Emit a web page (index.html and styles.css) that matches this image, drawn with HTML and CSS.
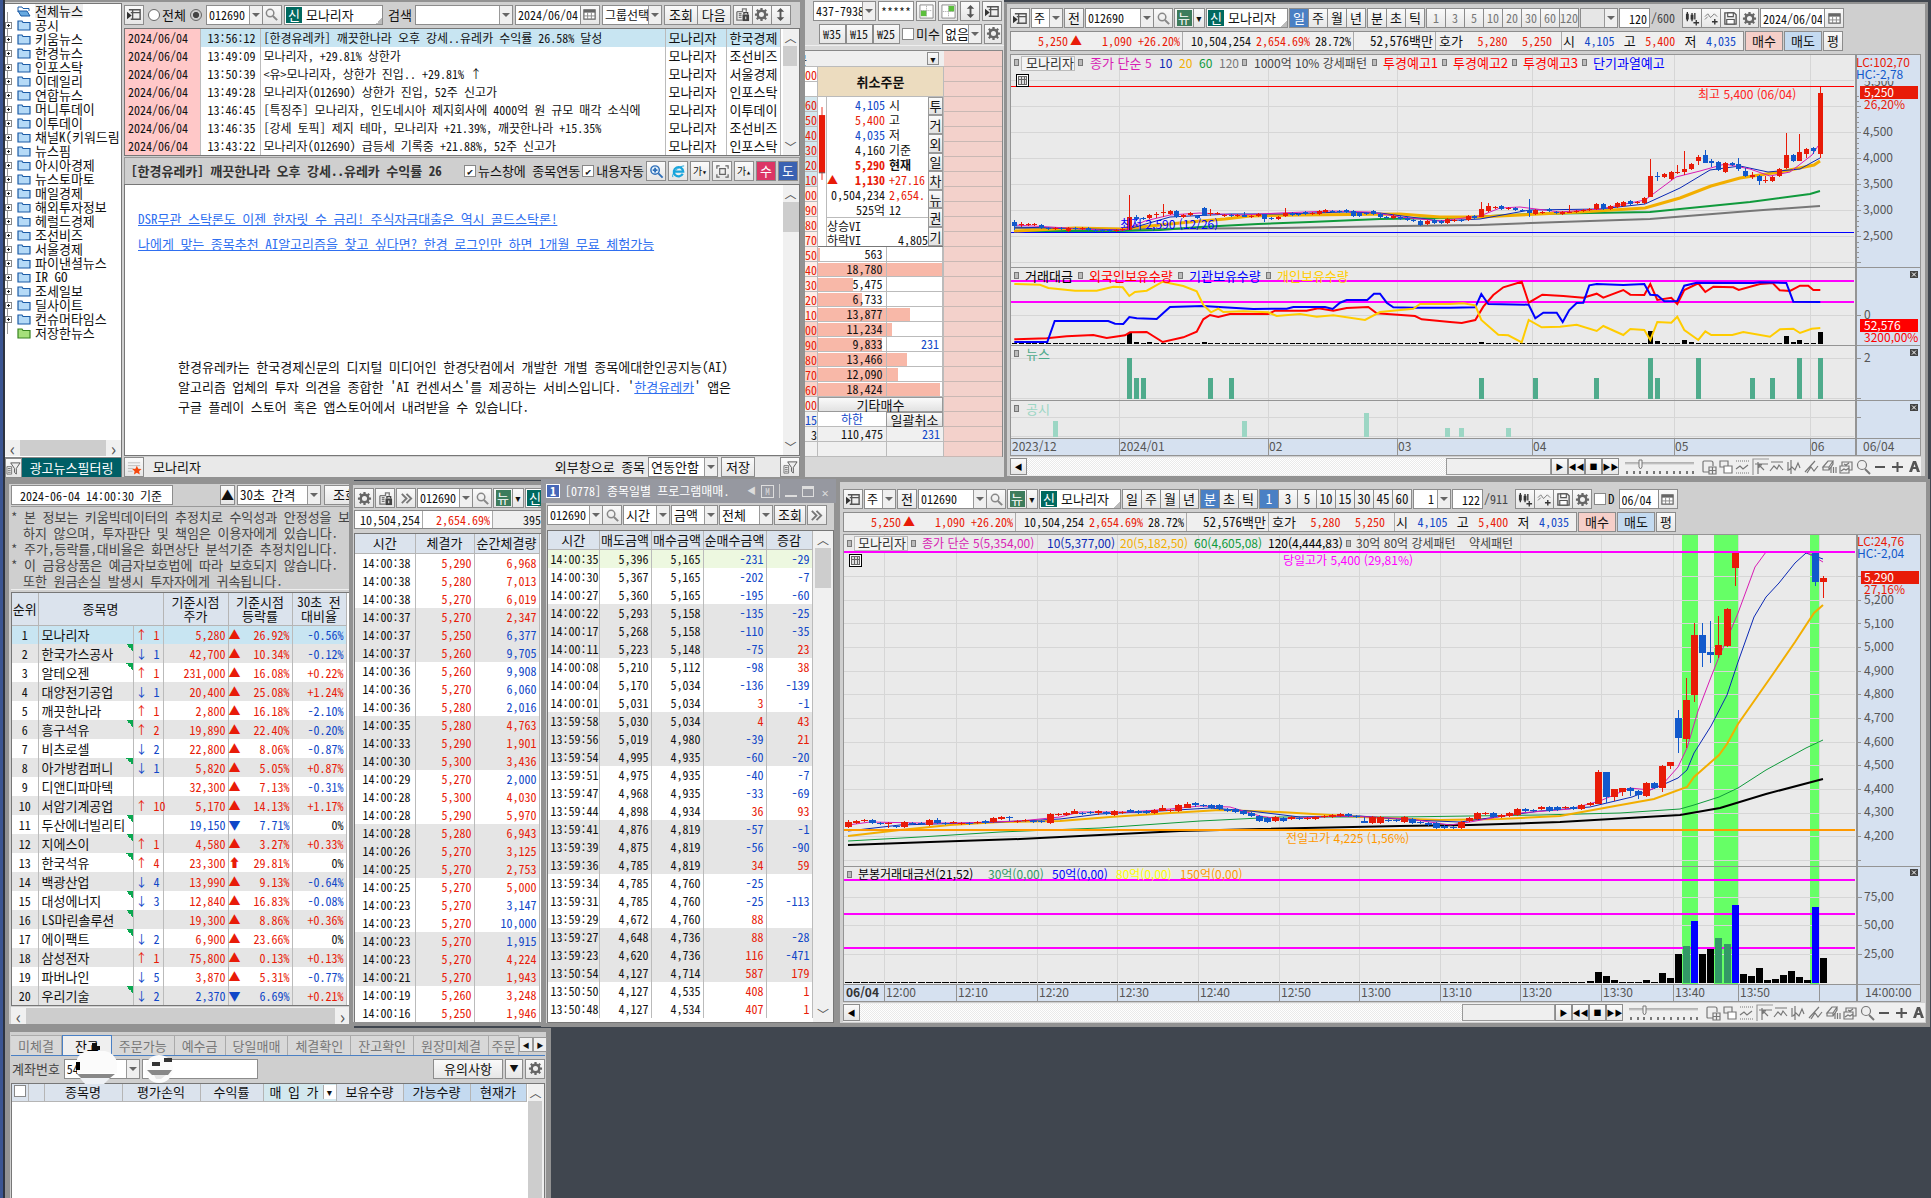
FILE: index.html
```html
<!DOCTYPE html>
<html lang="ko">
<head>
<meta charset="utf-8">
<title>트레이딩 데스크톱</title>
<link rel="stylesheet" href="styles.css">
</head>
<body>
<svg class="defs" aria-hidden="true">
<symbol id="panel" viewBox="0 0 16 16"><path d="M2 3h12v10H4M6 3v10M4 6h10" fill="none" stroke="#555" stroke-width="1.5"/><path d="M0 5l5 4-5 4z" fill="#333"/></symbol>
<symbol id="gear" viewBox="0 0 16 16"><circle cx="8" cy="8" r="4" fill="none" stroke="#666" stroke-width="2.6"/><path d="M8 1v3M8 12v3M1 8h3M12 8h3M3 3l2 2M11 11l2 2M13 3l-2 2M3 13l2-2" stroke="#666" stroke-width="2.4"/></symbol>
<symbol id="search" viewBox="0 0 16 16"><circle cx="6.5" cy="6.5" r="4" fill="none" stroke="#888" stroke-width="1.6"/><path d="M9.5 9.500l4.500 4.500" stroke="#888" stroke-width="2.200"/></symbol>
<symbol id="lock" viewBox="0 0 16 16"><path d="M2 5h6V2h4v3M2 5v9h6M4 7h3M4 9h3M4 11h3" fill="none" stroke="#777" stroke-width="1.4"/><path d="M8 8h7v7H8z" fill="#444"/><path d="M9.500 8V6h4v2" fill="none" stroke="#444" stroke-width="1.400"/><path d="M11 10h1v3h-1z" fill="#fff"/></symbol>
<symbol id="updown" viewBox="0 0 16 16"><path d="M8 1l4 4H9v6h3l-4 4-4-4h3V5H4z" fill="#555"/></symbol>
<symbol id="cal" viewBox="0 0 16 16"><path d="M2 3h12v10H2z" fill="#fff" stroke="#666" stroke-width="1.300"/><path d="M2 3h12v3H2z" fill="#666"/><path d="M6 6v7M10 6v7M2 9.500h12" stroke="#888"/></symbol>
<symbol id="cand" viewBox="0 0 16 16"><path d="M1 3h3v6H1zM6 4h3v5H6z" fill="#333"/><path d="M2.500 1v10M7.500 2v9M10.500 2v7M12 9.500v6M9 12.500h6" stroke="#333" stroke-width="1.400"/></symbol>
<symbol id="linep" viewBox="0 0 16 16"><path d="M1 6l3-3 3 4 4-4 3 3M1 9l3-3" fill="none" stroke="#777"/><path d="M11.500 8.500v6M8.500 11.500h6" stroke="#333" stroke-width="1.500"/></symbol>
<symbol id="save" viewBox="0 0 16 16"><path d="M2 2h10l2 2v10H2z" fill="#eee" stroke="#555" stroke-width="1.400"/><path d="M5 2h6v4H5zM4 9h8v5H4z" fill="#fff" stroke="#555" stroke-width="1.200"/></symbol>
<symbol id="more" viewBox="0 0 16 16"><path d="M3 3l5 5-5 5M8 3l5 5-5 5" fill="none" stroke="#777" stroke-width="2"/></symbol>
<symbol id="funnel" viewBox="0 0 16 16"><path d="M5 2h10l-4 6v6l-2-2V8z" fill="#eee" stroke="#555"/><path d="M1 6h5v8H1zM2 8h3M2 10h3M2 12h3" fill="none" stroke="#777"/></symbol>
<symbol id="star" viewBox="0 0 16 16"><path d="M1 3h13M1 6h13M1 9h6M1 12h5" stroke="#bbb"/><path d="M10.500 6l1.500 3.200 3.500.4-2.600 2.300.7 3.500-3.100-1.800-3.100 1.800.7-3.500L5.500 9.600l3.500-.4z" fill="#f5470d"/></symbol>
<symbol id="folder" viewBox="0 0 14 12"><path d="M1 2h4l1 1.500h7V11H1z" fill="#b5daf7" stroke="#1b5ba5" stroke-width="1.200"/></symbol>
<symbol id="folderg" viewBox="0 0 14 12"><path d="M1 2h4l1 1.500h7V11H1z" fill="#a5e07a" stroke="#388420" stroke-width="1.200"/></symbol>
<symbol id="foldero" viewBox="0 0 14 12"><path d="M1 7V2h4l1 1.500h6V6" fill="#fff" stroke="#1b5ba5"/><path d="M1 6h9l3 5H4z" fill="#67a9e0" stroke="#1b5ba5"/></symbol>
<symbol id="zoomin" viewBox="0 0 16 16"><circle cx="6.500" cy="6.500" r="4.500" fill="#e3f1fc" stroke="#2f6fb8" stroke-width="1.500"/><path d="M6.500 4v5M4 6.500h5M10 10l4.500 4.500" stroke="#2f6fb8" stroke-width="2"/></symbol>
<symbol id="ie" viewBox="0 0 16 16"><path d="M12.500 10.500A5 5 0 1 1 13 8H4" fill="none" stroke="#19a5dc" stroke-width="2.400"/><path d="M2 14C0 11 8 2 14 2" fill="none" stroke="#19a5dc"/></symbol>
<symbol id="fit" viewBox="0 0 16 16"><path d="M5 5h6v6H5zM2 5V2h3M11 2h3v3M14 11v3h-3M5 14H2v-3" fill="none" stroke="#666" stroke-width="1.300"/></symbol>
<symbol id="gridl" viewBox="0 0 16 16"><path d="M1 1h14v14H1z" fill="#fff" stroke="#888"/><path d="M2 7h6v6H2z" fill="#5bbf3c"/><path d="M8 2v12M2 7h12" stroke="#999" stroke-dasharray="1 1"/></symbol>
<symbol id="gridr" viewBox="0 0 16 16"><path d="M1 1h14v14H1z" fill="#fff" stroke="#888"/><path d="M8 2h6v6H8z" fill="#5bbf3c"/><path d="M8 2v12M2 8h12" stroke="#999" stroke-dasharray="1 1"/></symbol>
<symbol id="tools" viewBox="0 0 220 18"><g fill="none" stroke="#777" stroke-width="1.200"><path d="M8 14H3q-1 0-1-1V4q0-1 1-1h7q2 0 2 2v3"/><path d="M8 9h7v7H8zM11.500 9v7M8 12.500h7"/><path d="M19 3h8v6h-8z"/><path d="M23 8h8v7h-8z" fill="#fff"/><path d="M35 3h13M35 15h13" stroke-dasharray="1 1"/><path d="M35 11l4-3 3 3 5-4"/><path d="M52 17V1h16" stroke="#999"/><path d="M54 6h13M57 4v12M58 7l5 5M58 10V7h3"/><path d="M70 4h12M69 13l4-5 3 3 2-4 4 5"/><path d="M90 2v14M88 12l3-3 3 3 3-7 2 5M87 4v9"/><path d="M104 14l10-11M106 15l4-6 3 4 4-5"/><path d="M122 9l5-6h5l-4 6zM122 9v3h6V9M128 12l4-6V3" /><path d="M130 9v6M132.500 9v6M135 9v6"/><path d="M139 8h9v7h-9zM141 8V4h10v8h-3M140 13l3-2 2 1 3-2M143 6l2 1 3-2"/><circle cx="161" cy="7" r="4.500"/><path d="M164 11l5 5" stroke-width="2"/></g><path d="M174 9h10M191 9h11M196.500 4v10" stroke="#555" stroke-width="2"/><path d="M208 14l4-11h3l4 11h-3l-1-3h-3l-1 3zM212.500 9h2l-1-3z" fill="#555" fill-rule="evenodd"/></symbol>
<symbol id="slider" viewBox="0 0 72 18"><path d="M2 5h69" stroke="#777"/><path d="M2 6h69" stroke="#ccc"/><path d="M4 13v3M11 13v3M17 13v3M24 13v3M31 13v3M37 13v3M44 13v3M51 13v3M57 13v3M64 13v3M70 13v3" stroke="#000"/><path d="M16 2h3v7l-1.500 2L16 9z" fill="#f4f4f4" stroke="#777"/></symbol>
</svg>

<main class="desk">

<section class="win news" aria-label="뉴스">
 <aside class="tree">
  <ul id="tree"></ul>
  <div class="hs"><button class="sb">‹</button><i></i><button class="sb">›</button></div>
  <div class="filt"><button class="ib"><svg><use href="#funnel"/></svg></button><button class="ad">광고뉴스필터링</button></div>
 </aside>
 <div class="nmain">
  <div class="bar ntool">
   <button class="ib"><svg><use href="#panel"/></svg></button>
   <label class="rad"><input type="radio" name="scope">전체</label>
   <input type="radio" name="scope" checked aria-label="종목">
   <span class="sel w60"><select aria-label="종목코드"><option>012690</option></select></span><button class="ib sr"><svg><use href="#search"/></svg></button>
   <span class="nm"><b>신</b>모나리자</span>
   <label for="q" class="lb">검색</label><span class="sel w88"><select id="q"><option></option></select></span>
   <input class="in w58" value="2024/06/04" aria-label="날짜"><button class="ib jn"><svg><use href="#cal"/></svg></button>
   <span class="sel w70"><select aria-label="그룹"><option>그룹선택</option></select></span>
   <button class="tb">조회</button><button class="tb jn">다음</button>
   <button class="ib"><svg><use href="#lock"/></svg></button><button class="ib jn"><svg><use href="#gear"/></svg></button><button class="ib jn"><svg><use href="#updown"/></svg></button>
  </div>
  <div class="box nlist">
   <table><tbody id="nrows"></tbody></table>
   <div class="vs"><button class="sb">︿</button><i></i><button class="sb end">﹀</button></div>
  </div>
  <div class="bar nhead">
   <strong>[한경유레카] 깨끗한나라 오후 강세..유레카 수익률 26</strong>
   <label><input type="checkbox" checked>뉴스창에 종목연동</label><label><input type="checkbox" checked>내용자동</label>
   <button class="ib"><svg><use href="#zoomin"/></svg></button><button class="ib"><svg><use href="#ie"/></svg></button><button class="ib sm">가<sup>▾</sup></button><button class="ib"><svg><use href="#fit"/></svg></button><button class="ib sm">가<sup>▴</sup></button><button class="ib su">수</button><button class="ib do">도</button>
  </div>
  <div class="box nbody">
   <article>
    <p><a href="#">DSR무관 스탁론도 이젠 한자릿 수 금리! 주식자금대출은 역시 골드스탁론!</a></p>
    <p><a href="#">나에게 맞는 종목추천 AI알고리즘을 찾고 싶다면? 한경 로그인만 하면 1개월 무료 체험가능</a></p>
    <div class="about">한경유레카는 한국경제신문의 디지털 미디어인 한경닷컴에서 개발한 개별 종목에대한인공지능(AI)<br>알고리즘 업체의 투자 의견을 종합한 'AI 컨센서스'를 제공하는 서비스입니다. '<a href="#">한경유레카</a>' 앱은<br>구글 플레이 스토어 혹은 앱스토어에서 내려받을 수 있습니다.</div>
   </article>
   <div class="vs"><button class="sb">︿</button><i></i><button class="sb end">﹀</button></div>
  </div>
  <div class="bar nfoot">
   <button class="ib"><svg><use href="#star"/></svg></button><span class="grow">모나리자</span>
   <label for="ext">외부창으로 종목</label><span class="sel w70"><select id="ext"><option>연동안함</option></select></span><button class="tb">저장</button><button class="ib gap"><svg><use href="#funnel"/></svg></button>
  </div>
 </div>
</section>

<section class="win order" aria-label="주문">
 <div class="bar"><span class="sel w57"><select aria-label="계좌"><option>437-7938</option></select></span><input class="in w36" value="*******" aria-label="비밀번호"><button class="ib"><svg><use href="#gridl"/></svg></button><button class="ib"><svg><use href="#gridr"/></svg></button><button class="ib"><svg><use href="#updown"/></svg></button><button class="ib"><svg><use href="#panel"/></svg></button></div>
 <div class="bar r2"><button class="tb jn">₩35</button><button class="tb jn">₩15</button><button class="tb jn">₩25</button><label><input type="checkbox">미수</label><span class="sel w40"><select aria-label="구분"><option>없음</option></select></span><button class="ib"><svg><use href="#gear"/></svg></button></div>
 <div class="ob">
  <div class="obtop"><span>문</span><button class="dd">▾</button></div>
  <ol class="px" id="px"></ol>
  <div class="mid">
   <button class="cancel">취소주문</button>
   <div class="quote">
    <svg class="qc" viewBox="0 0 9 149"><path d="M4.500 2v82" stroke="#e81b08"/><path d="M1 11h7v65H1z" fill="#e81b08"/><path d="M1 76h7" stroke="#555"/></svg>
    <dl>
     <div class="dn"><dd>4,105</dd><dt>시</dt></div><div class="up"><dd>5,400</dd><dt>고</dt></div><div class="dn"><dd>4,035</dd><dt>저</dt></div><div><dd>4,160</dd><dt>기준</dt></div>
     <div class="up bd"><dd>5,290</dd><dt>현재</dt></div><div class="up"><dd><i>▲</i><b>1,130</b></dd><dt class="up">+27.16</dt></div><div><dd>0,504,234</dd><dt class="up">2,654.</dt></div><div><dd>525억</dd><dt>12</dt></div>
     <div class="vi ln"><dt>상승VI</dt></div><div class="vi"><dt>하락VI</dt><dd>4,805</dd></div>
    </dl>
    <nav><button>투</button><button>거</button><button>외</button><button>일</button><button>차</button><button>뉴</button><button>권</button><button>기</button></nav>
   </div>
   <table class="bids"><tbody id="bids"></tbody></table>
   <button class="etc">기타매수</button>
   <div class="two"><span class="dn">하한</span><button>일괄취소</button></div>
   <div class="two tot"><span>110,475</span><span class="dn">231</span></div>
   <div class="two tot"><span></span><span></span></div>
  </div>
  <div class="pink"></div>
 </div>
</section>

<section class="win chart c1" aria-label="일봉 차트">
 <div class="bar">
  <button class="ib"><svg><use href="#panel"/></svg></button><span class="sel w33"><select aria-label="시장"><option>주</option></select></span><button class="ib">전</button>
  <span class="sel w69"><select aria-label="종목코드"><option>012690</option></select></span><button class="ib sr jn"><svg><use href="#search"/></svg></button>
  <button class="ib nw"><b>뉴</b></button><button class="dn2 jn">▾</button><span class="nm w83"><b>신</b>모나리자</span>
  <span class="seg"><button class="on">일</button><button>주</button><button>월</button><button>년</button></span><span class="seg"><button>분</button><button>초</button><button>틱</button></span>
  <span class="seg off"><button>1</button><button>3</button><button>5</button><button>10</button><button>20</button><button>30</button><button>60</button><button>120</button></span>
  <span class="sel off w39"><select aria-label="주기" disabled><option></option></select></span><input class="in w30 r" value="120" aria-label="봉수"><span class="cnt">/600</span>
  <span class="seg"><button><svg><use href="#cand"/></svg></button><button><svg><use href="#linep"/></svg></button><button><svg><use href="#save"/></svg></button><button><svg><use href="#gear"/></svg></button></span>
  <input class="in w66" value="2024/06/04" aria-label="날짜"><button class="ib jn"><svg><use href="#cal"/></svg></button>
 </div>
 <div class="bar info"><div class="cells"><span class="up c-a"><em>5,250</em><i>▲</i><em>1,090</em><em>+26.20%</em></span><span class="c-b"><em>10,504,254</em><em class="up">2,654.69%</em><em>28.72%</em></span><span class="c-c">52,576백만</span><span class="c-d">호가<em class="up">5,280</em><em class="up">5,250</em></span><span class="c-e">시<em class="dn">4,105</em>고<em class="up">5,400</em>저<em class="dn">4,035</em></span></div><button class="buy">매수</button><button class="sell">매도</button><button class="ib">평</button></div>
 <svg class="plot" id="p1" viewBox="1010 54 911 402"></svg>
 <div class="bar foot"><button class="mb">◀</button><div class="track"><i></i></div><button class="mb">▶</button><button class="mb">◀◀</button><button class="mb">■</button><button class="mb">▶▶</button><svg class="sl"><use href="#slider"/></svg><svg class="tl"><use href="#tools"/></svg></div>
</section>

<section class="win rank" aria-label="순위">
 <div class="bar"><input class="in w162" value="2024-06-04 14:00:30 기준" aria-label="기준시각"><button class="up1">▲</button><span class="sel w84"><select aria-label="간격"><option>30초 간격</option></select></span><button class="tb w50">조회</button></div>
 <div class="note"><p>* 본 정보는 키움빅데이터의 추정치로 수익성과 안정성을 보</p><p class="i">하지 않으며, 투자판단 및 책임은 이용자에게 있습니다.</p><p>* 주가,등락률,대비율은 화면상단 분석기준 추정치입니다.</p><p>* 이 금융상품은 예금자보호법에 따라 보호되지 않습니다.</p><p class="i">또한 원금손실 발생시 투자자에게 귀속됩니다.</p></div>
 <div class="box"><table class="g rk"><colgroup><col class="k1"><col class="k2"><col class="k3"><col class="k4"><col class="k5"><col class="k6"></colgroup><thead><tr><th>순위</th><th colspan="2">종목명</th><th>기준시점<br>주가</th><th>기준시점<br>등락률</th><th>30초 전<br>대비율</th></tr></thead><tbody id="rk"></tbody></table></div>
 <div class="hs"><button class="sb">‹</button><i></i><button class="sb">›</button></div>
</section>

<section class="win tick" aria-label="체결">
 <div class="bar"><button class="ib"><svg><use href="#gear"/></svg></button><button class="ib"><svg><use href="#lock"/></svg></button><button class="ib"><svg><use href="#more"/></svg></button><span class="sel w57"><select aria-label="종목코드"><option>012690</option></select></span><button class="ib sr jn"><svg><use href="#search"/></svg></button><button class="ib nw"><b>뉴</b></button><button class="dn2 jn">▾</button><span class="nm"><b>신</b></span></div>
 <div class="sum"><span>10,504,254</span><span class="up">2,654.69%</span><span>395</span></div>
 <div class="box"><table class="g tk"><colgroup><col class="t1"><col class="t2"><col class="t3"></colgroup><thead><tr><th>시간</th><th>체결가</th><th>순간체결량</th></tr></thead><tbody id="tk"></tbody></table></div>
</section>

<section class="win prog" aria-label="종목일별 프로그램매매">
 <header><b>1</b><span>[0778] 종목일별 프로그램매매.</span><i>◀</i><i class="m">M</i><i class="bar1"></i><button class="mn" aria-label="최소화"></button><button class="mx" aria-label="최대화"></button><button class="cl">✕</button></header>
 <div class="bar"><span class="sel w57"><select aria-label="종목코드"><option>012690</option></select></span><button class="ib sr jn"><svg><use href="#search"/></svg></button><span class="sel w46"><select aria-label="기준"><option>시간</option></select></span><span class="sel w46"><select aria-label="단위"><option>금액</option></select></span><span class="sel w54"><select aria-label="구분"><option>전체</option></select></span><button class="tb">조회</button><button class="ib"><svg><use href="#more"/></svg></button></div>
 <div class="box"><table class="g pg"><colgroup><col class="g1"><col class="g2"><col class="g2"><col class="g3"><col class="g4"></colgroup><thead><tr><th>시간</th><th>매도금액</th><th>매수금액</th><th>순매수금액</th><th>증감</th></tr></thead><tbody id="pg"></tbody></table>
  <div class="vs"><button class="sb">︿</button><i></i><button class="sb end">﹀</button></div></div>
</section>

<section class="win chart c2" aria-label="분봉 차트">
 <div class="bar">
  <button class="ib"><svg><use href="#panel"/></svg></button><span class="sel w33"><select aria-label="시장"><option>주</option></select></span><button class="ib">전</button>
  <span class="sel w69"><select aria-label="종목코드"><option>012690</option></select></span><button class="ib sr jn"><svg><use href="#search"/></svg></button>
  <button class="ib nw"><b>뉴</b></button><button class="dn2 jn">▾</button><span class="nm w83"><b>신</b>모나리자</span>
  <span class="seg"><button>일</button><button>주</button><button>월</button><button>년</button></span><span class="seg"><button class="on">분</button><button>초</button><button>틱</button></span>
  <span class="seg"><button class="on">1</button><button>3</button><button>5</button><button>10</button><button>15</button><button>30</button><button>45</button><button>60</button></span>
  <span class="sel w39"><select aria-label="주기"><option>&nbsp; 1</option></select></span><input class="in w30 r" value="122" aria-label="봉수"><span class="cnt">/911</span>
  <span class="seg"><button><svg><use href="#cand"/></svg></button><button><svg><use href="#linep"/></svg></button><button><svg><use href="#save"/></svg></button><button><svg><use href="#gear"/></svg></button></span>
  <label><input type="checkbox">D</label><input class="in w40" value="06/04" aria-label="날짜"><button class="ib jn"><svg><use href="#cal"/></svg></button>
 </div>
 <div class="bar info"><div class="cells"><span class="up c-a"><em>5,250</em><i>▲</i><em>1,090</em><em>+26.20%</em></span><span class="c-b"><em>10,504,254</em><em class="up">2,654.69%</em><em>28.72%</em></span><span class="c-c">52,576백만</span><span class="c-d">호가<em class="up">5,280</em><em class="up">5,250</em></span><span class="c-e">시<em class="dn">4,105</em>고<em class="up">5,400</em>저<em class="dn">4,035</em></span></div><button class="buy">매수</button><button class="sell">매도</button><button class="ib">평</button></div>
 <svg class="plot" id="p2" viewBox="843 535 1078 468"></svg>
 <div class="bar foot"><button class="mb">◀</button><div class="track"><i></i></div><button class="mb">▶</button><button class="mb">◀◀</button><button class="mb">■</button><button class="mb">▶▶</button><svg class="sl"><use href="#slider"/></svg><svg class="tl"><use href="#tools"/></svg></div>
</section>

<section class="win acct" aria-label="계좌">
 <nav class="tabs"><button>미체결</button><button class="on">잔고</button><button>주문가능</button><button>예수금</button><button>당일매매</button><button>체결확인</button><button>잔고확인</button><button>원장미체결</button><button>주문</button><span><button>◀</button><button>▶</button></span></nav>
 <div class="bar"><label for="acc">계좌번호</label><span class="sel w76"><select id="acc"><option>54</option></select></span><input class="in w114" aria-label="계좌명"><span class="grow"></span><button class="tb w70">유의사항</button><button class="dn2">▼</button><button class="ib"><svg><use href="#gear"/></svg></button></div>
 <div class="box"><table class="g ac"><colgroup><col class="a1"><col class="a1"><col class="a2"><col class="a2"><col class="a3"><col class="a4"><col class="a5"><col class="a5"><col class="a6"></colgroup><thead><tr><th><input type="checkbox" aria-label="전체선택"></th><th></th><th>종목명</th><th>평가손익</th><th>수익률</th><th class="tq"><span>매 입 가<button>▾</button></span></th><th>보유수량</th><th class="bl">가능수량</th><th class="bl">현재가</th></tr></thead></table>
  <div class="vs"><button class="sb">︿</button><i></i></div></div>
 <svg class="mask" viewBox="0 0 110 44"><path d="M17 -8h5v3h3v4h-8z" fill="#111"/><path d="M2 8Q6 0 14 0H30Q40 2 42 12V22H2z" fill="#fbfbfb"/><path d="M2 23h38l-5 4H6z" fill="#888"/><path d="M5 27h30l-6 6H10z" fill="#eef1f5"/><path d="M1 11h4v8H1z" fill="#000"/><circle cx="84" cy="18" r="14" fill="#fbfbfb"/><path d="M77 11h8v4h-8zM89 7h8v4h-8z" fill="#333"/><path d="M72 19h25l-4 5H77z" fill="#888"/><path d="M79 24h12l-5 4h-5z" fill="#e5e5e5"/></svg>
</section>
</main>
<script src="app.js"></script>
</body>
</html>
```
FILE: app.js
```js
const $ = id => document.getElementById(id);
const sign = v => v[0] === '-' ? 'dn' : 'up';

// news tree
$('tree').innerHTML = '전체뉴스|공시|키움뉴스|한경뉴스|인포스탁|이데일리|연합뉴스|머니투데이|이투데이|채널K(키워드림|뉴스핌|아시아경제|뉴스토마토|매일경제|해외투자정보|헤럴드경제|조선비즈|서울경제|파이낸셜뉴스|IR GO|조세일보|딜사이트|컨슈머타임스|저장한뉴스'
  .split('|').map((n, i, a) => {
    const last = i === a.length - 1, icon = i === 0 ? 'foldero' : last ? 'folderg' : 'folder';
    return `<li${i ? '' : ' class="on"'}><i></i><svg><use href="#${icon}"/></svg><span>${n}</span></li>`;
  }).join('');

// news list
$('nrows').innerHTML = [
  ['13:56:12', '[한경유레카] 깨끗한나라 오후 강세..유레카 수익률 26.58% 달성', '한국경제'],
  ['13:49:09', '모나리자, +29.81% 상한가', '조선비즈'],
  ['13:50:39', '&lt;유&gt;모나리자, 상한가 진입.. +29.81% ↑', '서울경제'],
  ['13:49:28', '모나리자(012690) 상한가 진입, 52주 신고가', '인포스탁'],
  ['13:46:45', '[특징주] 모나리자, 인도네시아 제지회사에 4000억 원 규모 매각 소식에', '이투데이'],
  ['13:46:35', '[강세 토픽] 제지 테마, 모나리자 +21.39%, 깨끗한나라 +15.35%', '조선비즈'],
  ['13:43:22', '모나리자(012690) 급등세 기록중 +21.88%, 52주 신고가', '인포스탁'],
].map(r => `<tr><td class="d">2024/06/04</td><td class="t">${r[0]}</td><td class="s">${r[1]}</td><td class="n">모나리자</td><td class="p">${r[2]}</td></tr>`).join('');

// order book
$('px').innerHTML = '00,,60,50,40,30,20,10,00,90,80,70,50,40,30,20,10,00,90,80,70,60,00,15,3,'.split(',').map(v => `<li>${v}</li>`).join('');
$('bids').innerHTML = [['563', 2], ['18,780', 125], ['5,475', 35], ['6,733', 44], ['13,877', 92], ['11,234', 74], ['9,833', 64, 231], ['13,466', 89], ['12,090', 80], ['18,424', 122]]
  .map(r => `<tr style="--w:${r[1]}px"><td>${r[0]}</td><td class="dn">${r[2] || ''}</td></tr>`).join('');

// ranking
$('rk').innerHTML = `모나리자,u1,5 280,u,26.92,-0.56
한국가스공사*,d1,42 700,u,10.34,-0.12
알테오젠*,u1,231 000,u,16.08,+0.22
대양전기공업,d1,20 400,u,25.08,+1.24
깨끗한나라,u1,2 800,u,16.18,-2.10
흥구석유*,u2,19 890,u,22.40,-0.20
비츠로셀,d2,22 800,u,8.06,-0.87
아가방컴퍼니*,d1,5 820,u,5.05,+0.87
디앤디파마텍,,32 300,u,7.13,-0.31
서암기계공업,u10,5 170,u,14.13,+1.17
두산에너빌리티*,,19 150,d,7.71,0
지에스이*,u1,4 580,u,3.27,+0.33
한국석유*,u4,23 300,l,29.81,0
백광산업,d4,13 990,u,9.13,-0.64
대성에너지*,d3,12 840,u,16.83,-0.08
LS마린솔루션*,,19 300,u,8.86,+0.36
에이팩트*,d2,6 900,u,23.66,0
삼성전자,u1,75 800,u,0.13,+0.13
파버나인,d5,3 870,u,5.31,-0.77
우리기술*,d2,2 370,d,6.69,+0.21`.split('\n').map((l, i) => {
  const [n, a, p, m, r, c] = l.split(',');
  const mv = m === 'd' ? 'dn' : 'up', ar = a ? (a[0] === 'u' ? '↑' : '↓') + ' ' + a.slice(1) : '';
  return `<tr><td class="c">${i + 1}</td><td class="nmc${n.endsWith('*') ? ' mk' : ''}">${n.replace('*', '')}</td><td class="l ${a[0] === 'u' ? 'up' : 'dn'}">${ar}</td><td class="${mv}">${p.replace(' ', ',')}</td><td class="${mv}"><span class="rt"><i>${{ u: '▲', d: '▼', l: '⬆' }[m]}</i>${r}%</span></td><td class="${c === '0' ? '' : sign(c)}">${c}%</td></tr>`;
}).join('');

// ticks
$('tk').innerHTML = `38 5290 6968|38 5280 7013|38 5270 6019|37 5270 2347|37 5250 -6377|37 5260 -9705|36 5260 -9908|36 5270 -6060|36 5280 -2016|35 5280 4763|33 5290 1901|30 5300 3436|29 5270 -2000|28 5300 4030|28 5290 5970|28 5280 6943|26 5270 3125|25 5270 2753|25 5270 5000|23 5270 -3147|23 5270 -10000|23 5270 -1915|23 5270 4224|21 5270 1943|19 5260 3248|16 5250 1946`
  .split('|').map(l => {
    const [t, p, q] = l.split(' ');
    return `<tr><td>14:00:${t}</td><td class="up">${(+p).toLocaleString('en')}</td><td class="${sign(q)}">${Math.abs(q).toLocaleString('en')}</td></tr>`;
  }).join('');

// program trading
$('pg').innerHTML = `14:00:35 5396 5165 -231 -29|14:00:30 5367 5165 -202 -7|14:00:27 5360 5165 -195 -60|14:00:22 5293 5158 -135 -25|14:00:17 5268 5158 -110 -35|14:00:11 5223 5148 -75 23|14:00:08 5210 5112 -98 38|14:00:04 5170 5034 -136 -139|14:00:01 5031 5034 3 -1|13:59:58 5030 5034 4 43|13:59:56 5019 4980 -39 21|13:59:54 4995 4935 -60 -20|13:59:51 4975 4935 -40 -7|13:59:47 4968 4935 -33 -69|13:59:44 4898 4934 36 93|13:59:41 4876 4819 -57 -1|13:59:39 4875 4819 -56 -90|13:59:36 4785 4819 34 59|13:59:34 4785 4760 -25 |13:59:31 4785 4760 -25 -113|13:59:29 4672 4760 88 |13:59:27 4648 4736 88 -28|13:59:23 4620 4736 116 -471|13:50:54 4127 4714 587 179|13:50:50 4127 4535 408 1|13:50:48 4127 4534 407 1`
  .split('|').map(l => {
    const [t, a, b, n, c] = l.split(' ');
    return `<tr><td>${t}</td><td>${(+a).toLocaleString('en')}</td><td>${(+b).toLocaleString('en')}</td><td class="${sign(n)}">${n}</td><td class="${c ? sign(c) : ''}">${c}</td></tr>`;
  }).join('');

// chart drawing helpers
const RED = '#e81b08', BLUE = '#1159cc', GRID = '#d6d6d6', AX = '#949494';
const line = (x1, y1, x2, y2, c, w = 1) => `<path d="M${x1} ${y1}L${x2} ${y2}" stroke="${c}" stroke-width="${w}" fill="none"/>`;
const rect = (x, y, w, h, c, s) => `<rect x="${x}" y="${y}" width="${w}" height="${h}" fill="${c}"${s ? ` stroke="${s}"` : ''}/>`;
const text = (x, y, s, c, k = '') => `<text x="${x}" y="${y}" fill="${c}" class="${k}">${s}</text>`;
const poly = (p, c, w) => `<polyline points="${p}" fill="none" stroke="${c}" stroke-width="${w}"/>`;
const dot = (x, y) => rect(x + .5, y - 3.5, 4, 6, '#bbb', '#777');
const closer = y => rect(1910, y, 8, 7, '#444') + `<path d="M1912 ${y + 1.5}l4 4m0-4l-4 4" stroke="#fff"/>`;
const candles = (s, x0, dx, w, y0, k) => s.split('|').map(c => {
  const [i, col, t, b, wt, wb] = c.split(' ');
  const X = Math.round(x0 + dx * i), Y = v => Math.round(y0 + v / k), f = col === 'r' ? RED : BLUE;
  const T = Y(t), B = Math.max(Y(b), T + 1);
  return line(X + .5, wt ? Y(wt) : T - 1, X + .5, wb ? Y(wb) : B + 1, f) + rect(X - (w - 1) / 2, T, w, B - T, f);
}).join('');

// daily chart
{
  let h = rect(1010, 54, 911, 402, '#eaeaea') + rect(1856, 54, 65, 402, '#d6e1f0') + rect(1010, 439, 911, 17, '#d6e1f0');
  [1119, 1268, 1397, 1532, 1674, 1810].forEach(x => h += line(x + .5, 55, x + .5, 438, GRID));
  for (let y = 80; y < 264; y += 26) h += line(1011, y + .5, 1854, y + .5, GRID);
  [315, 358, 398, 417, 436].forEach(y => h += line(1011, y + .5, 1854, y + .5, GRID));
  h += line(1011, 232.5, 1854, 232.5, '#00f');
  h += poly('1014,228 1140,229 1280,228 1400,226 1480,225 1560,222 1650,219 1750,211 1820,206', '#777', 2);
  h += poly('1014,231 1120,231 1160,230 1200,227 1258,224 1310,222 1380,219 1450,218 1530,214 1650,212 1750,202 1810,194 1820,191', '#109a3c', 2);
  h += poly('1014,231 1075,228 1120,229 1160,225 1190,222 1225,219 1250,216 1300,215 1400,214 1440,217 1480,217 1520,215 1580,212 1645,208 1680,198 1711,186 1740,178 1780,172 1814,165 1820,161', '#f2ae00', 3);
  h += poly('1014,227 1125,230 1170,217 1230,214 1280,214 1345,212 1380,213 1440,221 1480,219 1530,210 1600,209 1645,204 1680,188 1710,170 1740,166 1768,172 1800,169 1820,158', '#0a28b4', 1);
  h += poly('1014,225 1050,227 1100,230 1125,230 1145,221 1170,215 1200,213 1240,215 1280,213 1330,211 1370,212 1400,217 1440,221 1480,216 1500,208 1520,207 1560,212 1600,209 1645,200 1676,177 1700,171 1725,164 1750,169 1770,176 1790,172 1812,155 1818,146', '#d81cb4', 1);
  h += candles('0 b 666 678 660 690|1 r 672 676 666 682|2 r 672 675|3 r 673 676|4 b 676 685|5 b 685 688|6 r 685 688|7 b 685 687|8 r 684 692|9 b 685 686|10 r 685 686|11 b 684 689|12 b 689 691|13 b 690 691|14 b 690 691|15 r 690 691|16 r 688 691|17 r 652 690 585 690|18 b 652 658 646 664|19 b 655 658|20 r 645 655|21 r 643 645 637 655|22 r 637 640 612 650|23 r 632 641|24 b 634 650|25 r 645 651|26 r 640 645|27 b 648 654|28 b 625 647 621 647|29 r 640 642 626 648|30 r 640 642|31 r 645 646|32 b 645 646|33 r 646 647|34 b 645 650 636 652|35 r 647 649|36 r 643 648|37 b 642 656 642 666|38 b 655 657|39 r 650 658|40 r 640 648 624 650|41 b 640 646|42 b 642 644|43 b 636 642|44 r 638 642|45 r 632 642|46 r 630 636|47 b 634 636|48 b 634 636|49 b 630 636|50 b 634 648|51 b 638 648|52 b 640 642|53 b 633 641|54 b 642 652|55 b 652 654|56 r 649 655 641 657|57 b 652 656|58 b 655 661|59 b 660 662|60 b 663 674|61 r 662 672|62 b 661 668|63 b 662 668|64 r 658 670|65 r 660 664|66 b 660 664|67 r 648 660|68 b 649 653|69 r 628 652 607 652|70 r 619 634 610 636|71 r 620 622|72 b 619 627|73 r 624 626|74 b 624 629|75 b 630 632|76 b 630 638 597 650|77 r 631 641|78 r 635 637|79 b 628 634|80 b 635 640|81 r 635 643|82 r 635 637 615 637|83 r 634 636|84 r 630 633|85 r 628 630|86 r 613 626|87 b 612 626|88 r 619 626|89 r 610 620|90 r 606 618|91 b 603 612|92 r 607 609|93 r 595 608|94 r 528 590 477 592|95 b 528 530 517 543|96 r 521 531|97 r 516 536|98 r 517 519 496 522|99 r 508 516 454 524|100 r 491 507|101 r 471 482 466 496|102 b 465 489 450 489|103 b 484 490 477 502|104 b 486 510|105 r 489 515|106 b 489 496|107 b 491 508 475 514|108 b 514 528 505 530|109 r 525 530 517 536|110 b 528 543 526 554|111 r 539 541 528 548|112 r 532 542|113 r 508 528|114 r 465 503 399 508|115 b 466 483|116 r 456 482 403 484|117 r 448 461 444 473|118 b 444 452 441 463|119 r 279 461 260 473', 1014, 6.77, 5, 0, 3);
  h += line(1011, 86.5, 1854, 86.5, 'red');
  [267, 345, 400, 438].forEach(y => h += line(1010, y + .5, 1921, y + .5, AX));
  h += line(1856, 54, 1856, 456, AX, 2);
  h += line(1011, 281, 1854, 281, '#f0f', 2) + line(1011, 302, 1854, 302, '#f0f', 2);
  // volume bars, one dash per day when the value is negligible
  const big = { 17: 11, 18: 2, 20: 2, 28: 2, 69: 2, 94: 13, 95: 3, 99: 4, 100: 2, 114: 8, 115: 2, 116: 4, 119: 12 };
  for (let i = 0; i < 120; i++) { const v = big[i] || 1; h += rect(Math.round(1012 + 6.77 * i), 344 - v, 5, v, '#000'); }
  const pts = (a, b) => a.split(' ').map(p => { const [x, y] = p.split(','); return (1000 + x / 3).toFixed(1) + ',' + (230 + y / 3).toFixed(1); }).concat(b.split(' ').map(p => { const [x, y] = p.split(','); return (1450 + x / 3).toFixed(1) + ',' + (y / 3).toFixed(1); })).join(' ');
  h += poly(pts('43,328 140,325 200,319 280,315 320,324 375,316 390,307 440,306 488,336 550,322 590,305 610,268 630,255 655,261 690,252 805,252 825,242 920,242 955,235 1000,242 1040,234 1105,231 1130,250 1245,258 1265,268', '0,966 35,969 76,960 100,920 130,885 160,862 215,845 236,908 277,884 340,888 400,893 440,881 460,893 520,870 541,884 583,885 601,852 622,900 664,893 682,912 703,870 745,850 766,876 790,860 850,862 866,870 930,852 968,849 989,871 1020,873 1050,857 1075,857 1090,870 1111,870'), 'red', 2);
  h += poly(pts('43,336 142,336 164,273 325,273 345,281 370,282 388,261 410,265 470,267 510,231 610,228 670,232 760,237 860,236 880,231 975,231 998,237 1020,218 1040,210 1102,210 1122,191 1140,191 1160,218 1180,232 1240,233', '0,923 76,922 94,882 115,912 236,914 256,955 280,938 320,938 338,966 358,930 380,909 400,908 418,856 440,852 520,855 583,852 601,884 622,886 643,904 682,903 703,857 740,848 910,849 930,847 1009,849 1030,905 1111,906'), '#00f', 2);
  h += poly(pts('43,162 120,164 145,174 225,182 290,182 340,170 368,172 388,198 405,186 440,182 488,155 550,168 590,184 610,225 633,247 655,236 670,246 730,244 805,247 830,258 900,252 950,260 1000,256 1095,270 1140,246 1240,236 1260,222 1340,222', '0,912 40,910 76,916 94,960 145,1004 175,1006 215,1027 236,960 275,982 330,980 380,974 440,993 460,978 520,1005 541,987 583,990 601,1020 622,966 664,968 682,950 703,990 745,1020 766,994 784,1005 847,1005 880,996 960,1010 990,988 1030,986 1050,999 1085,986 1111,984'), '#fc0', 2);
  const bars = (o, base, c) => Object.entries(o).forEach(([i, v]) => h += rect(Math.round(1012 + 6.77 * i), base - v, 5, v, c));
  bars({ 17: 41, 18: 21, 19: 21, 29: 21, 32: 21, 69: 21, 77: 21, 86: 21, 94: 41, 95: 21, 101: 41, 109: 21, 112: 21, 116: 41, 119: 41 }, 399, '#4fab8c');
  bars({ 6: 16, 34: 16, 52: 24, 64: 9, 66: 9, 73: 9 }, 437, '#9cd6c4');
  [[1014, 63], [1078, 63], [1242, 63], [1372, 63], [1442, 63], [1512, 63], [1582, 63], [1014, 276], [1078, 276], [1178, 276], [1266, 276], [1014, 354], [1014, 409]].forEach(p => h += dot(...p));
  h += rect(1021.5, 56.5, 53, 14, '#f4f4f4', '#bbb') + text(1026, 68, '모나리자', '#333', 'k');
  h += text(1090, 68, '종가 단순', '#d81cb4', 'k') + text(1145, 68, '5', '#d81cb4') + text(1159, 68, '10', '#0a28b4') + text(1179, 68, '20', '#f2ae00') + text(1199, 68, '60', '#109a3c') + text(1219, 68, '120', '#777') + text(1254, 68, '1000억 10% 강세패턴', '#444')
    + text(1383, 68, '투경예고1', 'red', 'k') + text(1453, 68, '투경예고2', 'red', 'k') + text(1523, 68, '투경예고3', 'red', 'k') + text(1593, 68, '단기과열예고', '#00f', 'k')
    + text(1698, 99, '최고 5,400 (06/04)', '#f22') + text(1120, 229, '최저 2,590 (12/26)', '#00f')
    + text(1025, 281, '거래대금', '#000', 'k') + text(1089, 281, '외국인보유수량', 'red', 'k') + text(1189, 281, '기관보유수량', '#00f', 'k') + text(1277, 281, '개인보유수량', '#fc0', 'k')
    + text(1026, 359, '뉴스', '#4fab8c', 'k') + text(1026, 414, '공시', '#9cd6c4', 'k');
  h += rect(1016.5, 74.5, 12, 12, '#fff', '#000') + rect(1018.5, 76.5, 8, 8, '#ddd', '#666') + line(1021.5, 77, 1021.5, 85, '#666') + line(1024.5, 77, 1024.5, 85, '#666') + line(1018, 79.5, 1027, 79.5, '#666');
  for (let y = 96; y < 262; y += 5.2) h += line(1857, Math.round(y) + .5, 1859, Math.round(y) + .5, AX);
  [106, 132, 158, 184, 210, 236, 262, 315, 358, 398, 417].forEach(y => h += line(1857, y + .5, 1861, y + .5, AX));
  h += text(1864, 86, '5,500', '#555') + rect(1857, 55, 63, 26, '#d6e1f0') + text(1856, 67, 'LC:102,70', RED) + text(1856, 79, 'HC:-2,78', BLUE) + rect(1860, 86, 58, 13, RED) + text(1864, 97, '5,250', '#fff') + text(1864, 109, '26,20%', RED);
  ['4,500', '4,000', '3,500', '3,000', '2,500'].forEach((s, i) => h += text(1863, 136 + 26 * i, s, '#555'));
  h += text(1864, 319, '0', '#555') + rect(1860, 319, 58, 13, 'red') + text(1864, 330, '52,576', '#fff') + text(1864, 342, '3200,00%', 'red') + text(1864, 362, '2', '#555');
  [271, 349, 404].forEach(y => h += closer(y));
  [[1012, '2023/12'], [1120, '2024/01'], [1269, '02'], [1398, '03'], [1533, '04'], [1675, '05'], [1811, '06'], [1863, '06/04']].forEach(([x, s]) => h += text(x, 451, s, '#555') + (x > 1012 && x < 1860 ? line(x - .5, 438, x - .5, 456, AX) : ''));
  h += `<rect x="1010.5" y="54.5" width="910" height="401" fill="none" stroke="${AX}"/>`;
  $('p1').innerHTML = h;
}

// minute chart
{
  let h = rect(843, 535, 1078, 468, '#eaeaea') + rect(1857, 535, 64, 468, '#d6e1f0') + rect(843, 985, 1078, 18, '#d6e1f0');
  [[1682, 16], [1714, 24], [1810, 9]].forEach(([x, w]) => h += rect(x, 536, w, 449, '#6f6'));
  const xs = [884, 956, 1037, 1117, 1198, 1279, 1359, 1440, 1520, 1601, 1673, 1738, 1819];
  xs.forEach(x => h += line(x + .5, 536, x + .5, 985, GRID));
  for (let i = 0; i < 13; i++) { const y = Math.round(577 + 23.65 * i) + .5; h += line(844, y, 1855, y, GRID) + line(1857, y, 1861, y, AX); }
  [898, 926, 955].forEach(y => h += line(844, y + .5, 1855, y + .5, GRID) + line(1857, y + .5, 1862, y + .5, AX));
  h += poly('848,842 920,838 1000,833 1100,829 1200,822 1280,818 1400,818 1540,816 1620,814 1680,810 1694,806 1719,798 1738,789 1766,771 1806,749 1823,741', '#109a3c', 1);
  h += poly('848,846 930,843 1020,840 1100,836 1180,832 1260,830 1400,827 1470,826 1560,823 1680,816 1720,809 1766,795 1823,780', '#000', 2);
  h += poly('848,837 900,831 950,826 1000,823 1060,822 1110,818 1170,814 1220,811 1280,813 1330,816 1380,819 1440,821 1500,820 1560,817 1615,807 1654,800 1687,788 1694,778 1719,756 1727,745 1738,725 1752,705 1773,675 1795,643 1814,614 1823,606', '#f2ae00', 2);
  h += poly('848,832 900,826 1000,823 1060,820 1100,815 1160,812 1210,809 1250,812 1300,818 1360,817 1410,821 1460,823 1540,812 1590,808 1632,798 1660,787 1678,779 1687,771 1694,754 1711,727 1727,696 1738,663 1754,618 1766,598 1779,584 1795,564 1806,554 1823,560', '#0a28b4', 1);
  h += poly('848,826 870,823 920,824 960,824 1020,822 1060,818 1080,813 1130,813 1170,810 1200,807 1230,808 1260,817 1280,820 1340,817 1370,818 1410,820 1450,826 1470,823 1520,814 1570,810 1600,802 1630,789 1650,791 1663,785 1678,768 1687,749 1698,712 1711,678 1719,658 1730,633 1738,614 1755,568 1766,553', '#d81cb4', 1) + poly('1806,553 1823,563', '#d81cb4', 1);
  h += candles('0 r 1044 1058 1038 1062|1 r 1042 1046|2 r 1038 1042|3 b 1038 1046|4 b 1046 1049|5 r 1047 1050 1045 1062|6 b 1055 1058|7 r 1044 1058|8 b 1048 1050|9 b 1048 1050|10 r 1038 1054|11 b 1038 1048 1032 1050|12 b 1046 1050|13 r 1045 1048|14 r 1046 1050|15 b 1046 1050|16 r 1044 1047|17 b 1042 1047|18 r 1032 1043|19 r 1028 1034|20 b 1028 1033 1025 1041|21 r 1040 1044|22 r 1037 1042|23 b 1040 1043|24 b 1040 1044|25 r 1020 1046|26 r 1020 1022|27 r 1018 1023|28 r 1011 1019 1005 1020|29 b 1016 1019|30 b 1015 1018|31 r 1012 1016 1008 1024|32 b 1014 1019|33 r 1011 1022|34 r 1013 1018|35 b 1008 1015|36 b 1011 1016|37 b 1011 1018|38 r 1008 1016|39 r 1002 1012 992 1012|40 r 1008 1011|41 r 993 1012|42 r 989 1003 984 1003|43 b 988 993 984 1000|44 b 993 996|45 b 993 1003|46 b 993 1006|47 b 1004 1012|48 b 1004 1014|49 b 1010 1020|50 b 1018 1026|51 b 1026 1040|52 b 1032 1043|53 r 1030 1041|54 b 1032 1042|55 r 1030 1036|56 b 1031 1035|57 r 1031 1034|58 r 1028 1035|59 r 1025 1030|60 r 1022 1028|61 r 1019 1026|62 b 1020 1027|63 b 1025 1028|64 b 1040 1046 1028 1046|65 r 1028 1046|66 r 1030 1046|67 b 1037 1040|68 b 1037 1041', 848, 8.06, 7, 475, 3);
  h += candles('69 r 959 973|70 b 967 976|71 b 973 978|72 b 976 982|73 b 978 990|74 b 986 990|75 b 987 990|76 r 975 990|77 r 962 971|78 r 949 965|79 r 948 951|80 b 948 960|81 r 956 961|82 r 949 957|83 r 938 956|84 b 938 943|85 b 940 944|86 r 932 938|87 b 933 944|88 b 933 941|89 r 931 935|90 b 933 937|91 r 927 937|92 r 921 926|93 r 834 924 829 924|94 b 834 903 834 920|95 r 882 904 882 916|96 r 880 889 880 902|97 b 879 888 876 902|98 b 888 898 885 909|99 r 866 901|100 b 866 878|101 r 818 879 814 889|102 r 806 818 806 825|103 b 683 739 661 781|104 r 633 741 571 767|105 r 451 619 417 637|106 b 451 500 417 540|107 b 498 506 412 528|108 r 479 506 398 516|109 r 378 482|110 r 219 262 219 314|120 b 219 301 219 314|121 r 291 301 286 346', 848, 8.06, 7, 475, 2.8);
  h += line(844, 553, 1855, 553, '#f0f', 2) + line(844, 831, 1855, 831, '#f90', 2);
  [881, 915, 949].forEach(y => h += line(844, y, 1855, y, '#f0f', 2));
  const v = { 92: 2, 93: 11, 94: 7, 95: 3, 99: 3, 101: 10, 102: 5, 103: 29, 104: 37, 105: 62, 106: 29, 107: 34, 108: 45, 109: 39, 110: 78, 111: 9, 112: 7, 113: 15, 114: 3, 115: 4, 116: 8, 117: 12, 118: 6, 119: 3, 120: 76, 121: 25 };
  for (let i = 0; i < 122; i++) { const n = v[i] || 1; h += rect(Math.round(845 + 8.06 * i), 984 - n, 7, n, { 104: '#396', 108: '#396', 109: '#396', 105: '#00f', 110: '#00f', 120: '#00f' }[i] || '#000'); }
  h += line(843, 867.5, 1921, 867.5, AX) + line(843, 985.5, 1921, 985.5, AX) + line(1857, 535, 1857, 1003, AX, 2);
  [[847, 545], [911, 545], [1346, 545], [847, 876]].forEach(p => h += dot(...p));
  h += rect(854.5, 537.5, 53, 14, '#f4f4f4', '#bbb') + text(858, 549, '모나리자', '#333', 'k');
  h += text(922, 549, '종가 단순 5(5,354,00)', '#d81cb4') + text(1047, 549, '10(5,377,00)', '#0a28b4') + text(1120, 549, '20(5,182,50)', '#f2ae00') + text(1194, 549, '60(4,605,08)', '#109a3c') + text(1268, 549, '120(4,444,83)', '#000') + text(1356, 549, '30억 80억 강세패턴', '#444') + text(1469, 549, '약세패턴', '#444')
    + text(1283, 566, '당일고가 5,400 (29,81%)', '#f0f') + text(1286, 844, '전일고가 4,225 (1,56%)', '#f90')
    + text(858, 880, '분봉거래대금선(21,52)', '#000') + text(988, 880, '30억(0,00)', '#396') + text(1052, 880, '50억(0,00)', '#00f') + text(1116, 880, '80억(0,00)', '#ff0') + text(1180, 880, '150억(0,00)', '#f90');
  h += rect(849.5, 555.5, 12, 12, '#fff', '#000') + rect(851.5, 557.5, 8, 8, '#ddd', '#666') + line(854.5, 558, 854.5, 566, '#666') + line(857.5, 558, 857.5, 566, '#666') + line(851, 560.5, 860, 560.5, '#666');
  '5,200,5,100,5,000,4,900,4,800,4,700,4,600,4,500,4,400,4,300,4,200'.match(/\d,\d{3}/g).forEach((s, i) => h += text(1864, Math.round(605 + 23.6 * i), s, '#555'));
  h += text(1857, 547, 'LC:24,76', RED) + text(1857, 559, 'HC:-2,04', BLUE) + rect(1861, 572, 58, 13, RED) + text(1864, 583, '5,290', '#fff') + text(1864, 595, '27,16%', RED);
  h += text(1864, 902, '75,00', '#555') + text(1864, 930, '50,00', '#555') + text(1864, 959, '25,00', '#555') + closer(870);
  h += text(846, 998, '06/04', '#333', 'b');
  ['12:00', '12:10', '12:20', '12:30', '12:40', '12:50', '13:00', '13:10', '13:20', '13:30', '13:40', '13:50'].forEach((s, i) => h += text(xs[i] + 2, 998, s, '#555'));
  xs.forEach(x => h += line(x + .5, 985, x + .5, 1003, AX));
  h += text(1865, 998, '14:00:00', '#555') + `<rect x="843.5" y="535.5" width="1077" height="467" fill="none" stroke="${AX}"/>`;
  $('p2').innerHTML = h;
}
```
FILE: styles.css
```css
*{box-sizing:border-box}
body{margin:0;background:#40464f;color:#111;font:12px/18px "Noto Sans Mono CJK KR","Noto Sans CJK KR",monospace;overflow:hidden}
button,input,select{font:inherit;color:inherit;margin:0;padding:0;border-radius:0}
p,ul,ol,dl,dd{margin:0;padding:0}
ul,ol{list-style:none}
i,em{font-style:normal}
table{border-collapse:collapse;table-layout:fixed}
td,th{padding:0;font-weight:400}
.defs{position:absolute;width:0;height:0}
.up{color:#e81b08}
.dn{color:#1047c8}
.desk{position:relative;min-height:100vh;overflow:hidden;border-left:3px solid #3b5592;background:#40464f;box-shadow:inset 2px 0 #2d3340}
.win{position:absolute;background:#cfcfcf;border:solid #929292;display:flex;flex-direction:column}
.bar{display:flex;align-items:center;gap:1px}
.box{background:#fff;border:1px solid #777;display:flex;align-items:flex-start}
.grow{flex:1}

/* controls */
.ib,.tb,.mb,.dd,.dn2,.up1,.seg button{height:20px;border:1px solid #8c8c8c;background:linear-gradient(#fafafa,#e6e6e6);display:flex;align-items:center;justify-content:center;flex:none;line-height:16px;font-size:13px}
.ib{width:20px}
.ib svg,.seg svg{width:15px;height:15px}
.jn{margin-left:-2px}
.tb{padding:0 4px;white-space:nowrap}
.dn2{width:12px}
.in{height:20px;border:1px solid #8c8c8c;background:#fff;padding:0 2px;flex:none}
.r{text-align:right}
.sel{position:relative;height:20px;border:1px solid #8c8c8c;background:#fff;flex:none;display:block}
.sel select{appearance:none;border:0;background:none;width:100%;height:18px;padding-left:2px;line-height:18px;opacity:1}
.sel::before{content:"";position:absolute;right:0;top:0;width:12px;height:18px;background:#efefef;border-left:1px solid #999}
.sel::after{content:"";position:absolute;right:2px;top:7px;border:4px solid transparent;border-top-color:#666}
.sel.off{background:#e6e6e6}
.nm{height:20px;border:1px solid #8c8c8c;background:linear-gradient(135deg,transparent 50%,#bbb 50%) right bottom/6px 6px no-repeat #fff;display:flex;gap:3px;font-size:13px;flex:none;overflow:hidden}
.nm b,.nw b{background:#00695f;color:#fff;font-weight:400;width:16px;height:16px;line-height:15px;margin:1px;text-align:center;font-size:13px}
.nw b{background:#3d7c5c;width:15px;margin:0}
.seg{display:flex;flex:none}
.seg button+button{margin-left:-1px}
.seg button{width:20px}
.seg .on{background:#4a80c4;color:#fff}
.seg.off button{color:#777;font-size:12px}
input[type=checkbox]{appearance:none;width:12px;height:12px;border:1px solid #888;background:#fff;margin-right:2px;display:inline-grid;place-content:center;flex:none}
input[type=checkbox]:checked::after{content:"✔";font-size:10px;line-height:10px}
label{display:flex;align-items:center;white-space:nowrap;font-size:13px}
input[type=radio]{appearance:none;width:12px;height:12px;border:1px solid #666;border-radius:50%;background:#fff;margin:0 2px;flex:none}
input[type=radio]:checked{background:radial-gradient(#444 40%,#ccc 45%)}
.w30{width:31px}.w33{width:32px}.w36{width:36px}.w39{width:38px}.w40{width:40px}.w46{width:47px}.w54{width:54px}.w57{width:56px}.w58{width:58px}.w60{width:57px}.w66{width:65px}.w69{width:69px}.w70{width:70px}.w76{width:76px}.w83{width:82px}.w84{width:84px}.w88{width:98px}.w114{width:116px}.w162{width:162px}.w50{width:50px}

/* scrollbars */
.vs{width:16px;background:#f0f0f0;display:flex;flex-direction:column;flex:none;margin-left:auto;align-self:stretch}
.vs i{background:#cdcdcd;height:20px;width:14px}
.sb{border:0;background:none;width:15px;height:17px;font-size:12px;line-height:17px;color:#555}
.end{margin-top:auto}
.hs{display:flex;background:#f0f0f0;height:16px;align-items:center}
.hs i{background:#cdcdcd;height:16px;flex:1}
.hs .sb{font-size:18px;line-height:14px}

/* news */
.news{left:2px;top:0;width:799px;height:480px;border-width:2px 4px 3px 0;flex-direction:row;gap:2px}
.tree{width:117px;background:#fff;border:solid #777;border-width:1px 1px 0 0;display:flex;flex-direction:column;flex:none;margin-top:1px}
.tree ul{flex:1;background:linear-gradient(#999,#999) 2px 8px/1px 322px no-repeat}
.tree li{height:14px;line-height:14px;font-size:13px;display:flex;align-items:center;white-space:nowrap}
.tree li i{width:7px;height:7px;margin-right:5px;flex:none}
.tree li:not(:first-child):not(:last-child) i{border:1px solid #888;background:linear-gradient(#222,#222) center/3px 1px no-repeat,linear-gradient(#222,#222) center/1px 3px no-repeat,#fff}
.tree li svg{width:14px;height:12px;flex:none}
.tree li span{margin-left:4px}
.tree .on span{background:#eee}
.filt{display:flex;height:20px;border-top:1px solid #888;margin-top:1px;background:#cfcfcf}
.filt .ib{width:17px}
.ad{flex:1;border:0;background:#005f66;color:#fff;font-size:13px;line-height:18px}
.nmain{flex:1;display:flex;flex-direction:column;min-width:0}
.ntool{height:25px;gap:2px}
.ntool .jn{margin-left:-3px}
.ntool .sr{margin-left:-3px}
.ntool .nm{width:99px}
.lb{width:25px;margin-left:3px}
.ntool .w58{width:66px}.ntool .w70{width:60px}
.nlist{height:128px;margin-top:1px}
.nlist table{width:656px;height:126px}
.nlist tr{height:18px}
.nlist td{border-right:1px solid #bbb;font-size:12px;line-height:18px;white-space:nowrap}
.nlist tr:first-child td:not(.d){background:#c8e5f2}
.nlist .d{background:#ffc8c8;width:75px;padding-left:3px}
.nlist .t{width:60px;padding-left:7px}
.nlist .s{width:405px;padding-left:3px}
.nlist .n{width:61px;padding-left:3px;font-size:13px}
.nlist .p{font-size:13px;padding-left:3px}
.nhead{height:27px;padding:0 1px 0 6px;margin-top:1px;border:1px solid #999;border-bottom:0;gap:2px}
.nhead strong{font-size:13px;color:#333;width:341px;white-space:nowrap}
.nhead label{gap:0}
.nhead .ib:first-of-type{margin-left:auto}
.sm{font-size:10px}
.su{background:#dc3565;color:#fff}
.do{background:#3a62b2;color:#fff}
.nbody{flex:1}
.nbody article{padding:24px 0 0 13px;font-size:13px;white-space:nowrap}
.nbody p{height:25px;line-height:20px}
.nbody a{color:#2f6ff0}
.about{margin:98px 0 0 40px;line-height:20px}
.nbody .vs i{height:30px;width:100%}
.nfoot{height:20px;gap:3px;background:#e9e9e9;font-size:13px;margin-top:1px}
.nfoot .grow{padding-left:6px}
.gap{margin-left:22px}

/* order */
.order{left:801px;top:0;width:200px;height:479px;border-width:0 0 2px 1px;overflow:hidden;background:#d8d8d8}
.order .bar{gap:2px;height:22px;padding-right:2px;justify-content:flex-end;flex:none}
.order .r2{height:24px;padding-right:2px;border-bottom:1px solid #eee}
.order .r2 .tb{padding:0 4px 0 3px;font-size:12px}
.order .r2 .sel{width:40px}
.order .r2 select{font-size:13px}
.order .w57{width:63px}
.order .r2 .ib{width:18px}
.ob{display:grid;grid-template:16px 390px/13px 126px 1fr;margin:4px 1px 0 0;border-top:1px solid #888}
.obtop{grid-column:1/3;background:#efefef;display:flex;justify-content:space-between;overflow:hidden;border-bottom:1px solid #bbb}
.obtop span{margin-left:-9px}
.dd{width:12px;height:13px;margin:1px 5px 0 0}
.pink{grid-column:3;grid-row:1/3;background:repeating-linear-gradient(#f3d1cb 0 14px,#c9b8b4 14px 15px);background-position:0 1px;border-right:1px solid #888}
.px{color:#e81b08}
.px li{height:15px;line-height:15px;border-bottom:1px solid #bbb;border-right:1px solid #bbb;text-align:right;background:#fff}
.px li:nth-child(n+3):nth-child(-n+8){background:#d3e7ee}
.px li:nth-child(n+9){background:#fdeeea}
.px li:nth-child(n+18){background:#f9d3ca}
.px li:nth-child(n+23){background:#f1f1f1}
.px li:nth-child(24){color:#1047c8}
.px li:nth-child(25){color:#111}
.mid{display:flex;flex-direction:column;border-right:1px solid #bbb;font-size:12px}
.mid button{border:1px solid #999;background:linear-gradient(#fafafa,#e2e2e2);padding:0;line-height:13px;font-size:13px}
.mid .cancel{height:30px;background:#ecdcbf;border:0;border-bottom:1px solid #bbb;font-weight:700}
.quote{height:150px;display:flex;background:#fff;border-bottom:1px solid #777}
.qc{width:9px;height:149px;flex:none;border-right:1px solid #bbb}
.quote dl{flex:1}
.quote dl div{display:grid;grid-template-columns:58px 1fr;gap:4px;height:15px;line-height:15px;white-space:nowrap}
.quote dd{text-align:right}
.quote dt{color:#111}
.quote dt.up{color:#e81b08}
.quote dd i{float:left;font-size:11px}
.quote .bd{font-weight:700}
.quote .vi{grid-template-columns:auto auto;justify-content:space-between}
.quote .ln{border-top:1px solid #bbb}
.quote nav{width:15px;display:flex;flex-direction:column}
.quote nav button{flex:1}
.bids{width:125px;height:150px}
.bids tr{height:15px;background:linear-gradient(#f8b8a8,#f8b8a8) 0 1px/var(--w) 13px no-repeat #fff}
.bids td{border-bottom:1px solid #bbb;border-right:1px solid #bbb;text-align:right;padding-right:3px;line-height:14px}
.bids td:first-child{width:68px}
.etc{height:15px}
.two{display:grid;grid-template-columns:68px 1fr;height:15px;line-height:14px;background:#fff;border-bottom:1px solid #bbb;text-align:center}
.two span+span{text-align:right;padding-right:3px;border-left:1px solid #bbb}
.tot{background:#f0f0f0}
.tot span:first-child{text-align:right;padding-right:3px}

/* charts */
.c1{left:1001px;top:2px;width:924px;height:477px;border-width:2px 3px 3px 3px;padding:3px 4px 0 3px}
.c2{left:833px;top:479px;width:1094px;height:548px;border-width:3px 4px 4px 4px;padding:6px 1px 0 3px}
.chart .bar{height:22px}
.chart{background:#cfcfcf}
.cnt{width:30px;color:#444}
.chart label{margin:0 3px 0 1px}
.chart .info{height:24px}
.cells{display:flex;height:20px;border:1px solid #8c8c8c;background:#efefef;width:734px;line-height:18px}
.cells span{display:flex;justify-content:flex-end;border-right:1px solid #aaa;padding-right:2px;font-size:13px;white-space:nowrap}
.cells em{font-size:12px}
.cells i{font-size:12px;margin:0 0 0 2px}
.c-a{width:172px}.c-a em:nth-of-type(2){width:50px;text-align:right;margin-right:6px}
.c-b{width:171px;gap:5px}
.c-c{width:82px}
.cells .c-d{width:126px;justify-content:space-between;padding:0 9px 0 3px}
.cells .c-e{flex:1;justify-content:space-between;padding:0 7px 0 1px;border:0}
.buy,.sell{width:38px;height:20px;border:1px solid #8c8c8c;font-size:13px;line-height:16px}
.buy{background:#f5cfc9}
.sell{background:#c4daf0}
.plot{display:block;flex:none;margin-top:1px}
.c1 .plot{width:911px;height:402px}
.c2 .plot{width:1078px;height:468px;margin-top:0}
.plot text{font:12px "Noto Sans CJK KR",sans-serif}
.plot .k{font-size:13px}
.plot .b{font-weight:700}
.chart .foot{height:19px;background:#efefef;gap:0;margin-top:1px}
.foot .mb{width:17px;height:17px;font-size:8px;color:#000}
.track{flex:1;height:17px;background:repeating-conic-gradient(#fff 0 25%,#eaeaea 0 50%) 0 0/2px 2px;display:flex;justify-content:flex-end}
.track i{width:105px;background:#efefef;border:1px solid #999}
.c2 .track i{width:93px}
.sl{width:72px;height:18px;flex:none;margin:0 6px 0 4px}
.tl{width:220px;height:18px;flex:none}

/* grids */
.g{font-size:12px}
.g th{background:#dbe3ed;border-right:1px solid #b5b5b5;border-bottom:1px solid #b5b5b5;font-size:13px;line-height:14px;white-space:nowrap}
.g td{text-align:right;border-right:1px solid #bbb;padding-right:2px;line-height:18px;white-space:nowrap}
.g tbody tr{height:18px;background:#fff}

.rank{left:2px;top:480px;width:349px;height:548px;border-width:4px 0 4px 4px;padding-left:2px;overflow:hidden}
.rank .bar{height:25px;border-bottom:1px solid #999}
.rank .in{padding-left:8px;font-size:12px}
.up1{width:15px;margin-left:46px}
.rank .sel{margin:0 2px 0 1px}
.rank select{font-size:13px}
.rank .w50{width:42px}
.note{color:#444;font-size:13px;line-height:16px;height:83px;padding-top:2px;border-bottom:1px solid #eee;white-space:nowrap}
.note .i{padding-left:12px}
.rank .box{margin-top:2px}
.rk{width:334px}
.k1{width:26px}.k2{width:95px}.k3{width:30px}.k4{width:65px}.k5{width:64px}.k6{width:54px}
.rk thead tr{height:32px}
.rk tbody tr{height:19px}
.rk tbody tr:nth-child(even){background:#e5e5e5}
.rk tbody tr:first-child{background:#c8e5f2}
.rk .c{text-align:center;padding:0}
.rk .nmc{text-align:left;padding:0 0 0 3px;font-size:13px}
.rk .mk{background:linear-gradient(45deg,transparent 50%,#0aa850 50%) right top/7px 7px no-repeat}
.rk .l{text-align:left;padding-left:2px}
.rt{display:flex;justify-content:space-between}
.rank .hs{margin:1px 4px 0 0;height:17px}

.tick{left:346px;top:481px;width:200px;height:545px;border-width:4px 0 4px 4px;padding:3px 0 0 1px;overflow:hidden}
.tick .bar{height:22px}
.sum{display:grid;grid-template-columns:68px 70px 1fr;height:20px;margin-top:2px;border:1px solid #888;background:#efefef;line-height:17px;text-align:right}
.sum span{padding-right:2px;border-right:1px solid #aaa;background:#fff}
.sum span:last-child{background:#efefef;padding-right:6px}
.tick .box{margin-top:4px}
.tk{width:184px}
.t1{width:60px}.t2{width:59px}.t3{width:65px}
.tk thead tr{height:19px}
.tk td:first-child{padding-right:4px}
.tk tbody tr:nth-child(6n+4),.tk tbody tr:nth-child(6n+5),.tk tbody tr:nth-child(6n),.pg tbody tr:nth-child(6n+4),.pg tbody tr:nth-child(6n+5),.pg tbody tr:nth-child(6n){background:#e5e5e5}

.prog{left:538px;top:479px;width:298px;height:548px;border-width:0 5px 4px 5px;padding-left:1px}
.prog header{height:24px;background:#9698a0;color:#fff;display:flex;align-items:center;gap:5px;margin:0 -5px 0 -6px;padding:0 8px 0 5px;font-size:13px;white-space:nowrap}
.prog header b{background:#4667b8;border:1px solid #fff;width:14px;height:14px;line-height:12px;text-align:center;font-size:12px;flex:none}
.prog header span{flex:1;font-size:12px}
.prog header i{font-size:9px;flex:none}
.prog header .m{border:1px solid #ddd;width:13px;height:13px;line-height:11px;text-align:center}
.prog header .bar1{width:1px;height:14px;background:#ccc}
.prog header button{border:0;background:none;width:12px;height:11px;line-height:11px;font-size:12px;flex:none}
.prog header .mn{border-bottom:2px solid #ddd}
.prog header .mx{border:1px solid #ddd;border-top-width:3px}
.prog header i,.prog header button{color:#dcdcdc}
.prog .bar{height:24px}
.prog .sel:nth-of-type(n+2) select{font-size:13px}
.prog .tb{padding:0 3px}
.prog .box{margin:3px 0 0 0;flex:1}
.g1{width:51px}.g2{width:52px}.g3{width:63px}.g4{width:46px}
.pg{width:264px}
.pg thead tr{height:18px}
.pg td:first-child{padding-right:0}
.pg tbody tr:first-child{background:#edf8e0}
.prog .vs{width:20px;align-items:center}
.prog .vs i{height:40px;width:16px}

.acct{left:2px;top:1028px;width:546px;height:176px;border-width:4px 5px 0 5px;padding:3px 1px 0 1px}
.tabs{display:flex;height:21px;border-bottom:1px solid #4a80c4}
.tabs>button{border:1px solid #aaa;border-width:1px 1px 0 0;background:#d8d8d8;color:#777;padding:0 7px;font-size:13px;line-height:18px;white-space:nowrap;flex:none}
.tabs .on{background:#efefef;border:1px solid #4a80c4;border-bottom:0;color:#000;padding:0 12px}
.tabs>button:nth-child(9){width:30px;padding:0 2px;overflow:hidden}
.tabs span{display:flex;margin:2px 0 0 auto}
.tabs span button{width:14px;height:15px;border:1px solid #999;font-size:7px;line-height:10px;background:#efefef}
.acct .bar{height:25px;gap:2px}
.acct .dn2{width:18px;font-size:9px}
.acct label{color:#444;margin:0 2px 0 1px}
.acct .box{flex:1;margin-top:2px}
.ac{width:514px}
.a1{width:16px}.a2{width:78px}.a3{width:63px}.a4{width:73px}.a5{width:67px}.a6{width:56px}
.ac thead tr{height:17px}
.ac .tq{background:#d3e8ee}
.tq span{display:flex;justify-content:space-between;padding-left:6px}
.tq button{border:0;border-left:1px solid #aaa;background:#fff;width:13px}
.ac .bl{background:#c4daf0}
.ac input{margin:0}
.acct .vs i{flex:1}
.mask{position:absolute;left:65px;top:19px;width:110px;height:44px;overflow:visible}
```
